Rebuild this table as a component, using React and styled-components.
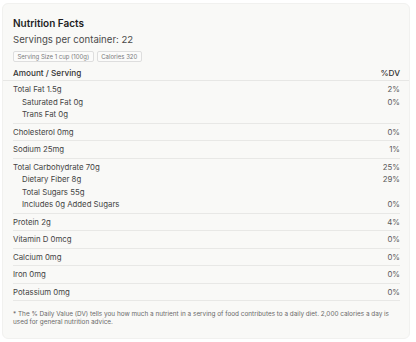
import React from "react";
import styled, { createGlobalStyle } from "styled-components";

const Global = createGlobalStyle`
  html, body { margin: 0; padding: 0; background: #ffffff; }
  body { font-family: Inter, "Noto Sans", "Liberation Sans", sans-serif; -webkit-font-smoothing: antialiased; }
`;

const Card = styled.section`
  box-sizing: border-box;
  margin: 3px 0 0 2px;
  width: 408px;
  padding: 12px 9px 11px 10px;
  background: #f9f9f7;
  border: 1px solid #f1f1ef;
  border-radius: 6px;
`;

const Title = styled.h1`
  margin: 0;
  font-size: 10px;
  line-height: 14px;
  font-weight: 600;
  color: #1e1e1e;
`;

const Servings = styled.div`
  margin-top: 3px;
  font-size: 9.6px;
  line-height: 14px;
  color: #4a4a4a;
`;

const Chips = styled.div`
  display: flex;
  gap: 3px;
  margin-top: 4px;
`;

const Chip = styled.span`
  box-sizing: border-box;
  height: 11px;
  padding: 0 3.5px;
  border: 1px solid #dedede;
  border-radius: 2px;
  background: #fbfbfa;
  font-size: 6px;
  line-height: 9px;
  color: #7a7a7a;
`;

const Header = styled.div`
  display: flex;
  justify-content: space-between;
  margin: 5px -9px 0 -10px;
  padding: 0 9px 1px 10px;
  border-bottom: 1px solid #e7e7e5;
  font-size: 8.2px;
  line-height: 12px;
  font-weight: 500;
  color: #333;
`;

const Group = styled.div`
  padding: 2px 0;
  border-bottom: 1px solid #e8e8e6;
`;

const Row = styled.div`
  display: flex;
  justify-content: space-between;
  padding-left: ${(p) => (p.$sub ? "9px" : "0")};
  font-size: 7.8px;
  line-height: 12.5px;
  color: #444;
`;

const Value = styled.span`
  color: #5a5a5a;
`;

const Footnote = styled.p`
  margin: 8.5px 0 0;
  font-size: 6.4px;
  line-height: 8.5px;
  color: #6a6a6a;
`;

const groups = [
  [
    ["Total Fat 1.5g", "2%"],
    ["Saturated Fat 0g", "0%", true],
    ["Trans Fat 0g", "", true],
  ],
  [["Cholesterol 0mg", "0%"]],
  [["Sodium 25mg", "1%"]],
  [
    ["Total Carbohydrate 70g", "25%"],
    ["Dietary Fiber 8g", "29%", true],
    ["Total Sugars 55g", "", true],
    ["Includes 0g Added Sugars", "0%", true],
  ],
  [["Protein 2g", "4%"]],
  [["Vitamin D 0mcg", "0%"]],
  [["Calcium 0mg", "0%"]],
  [["Iron 0mg", "0%"]],
  [["Potassium 0mg", "0%"]],
];

export default function App() {
  return (
    <>
      <Global />
      <Card>
        <Title>Nutrition Facts</Title>
        <Servings>Servings per container: 22</Servings>
        <Chips>
          <Chip>Serving Size 1 cup (100g)</Chip>
          <Chip>Calories 320</Chip>
        </Chips>
        <Header>
          <span>Amount / Serving</span>
          <span>%DV</span>
        </Header>
        {groups.map((g, i) => (
          <Group key={i}>
            {g.map(([label, dv, sub]) => (
              <Row key={label} $sub={sub}>
                <span>{label}</span>
                <Value>{dv}</Value>
              </Row>
            ))}
          </Group>
        ))}
        <Footnote>
          * The % Daily Value (DV) tells you how much a nutrient in a serving of food contributes to a daily diet. 2,000 calories a day is used for general nutrition advice.
        </Footnote>
      </Card>
    </>
  );
}
